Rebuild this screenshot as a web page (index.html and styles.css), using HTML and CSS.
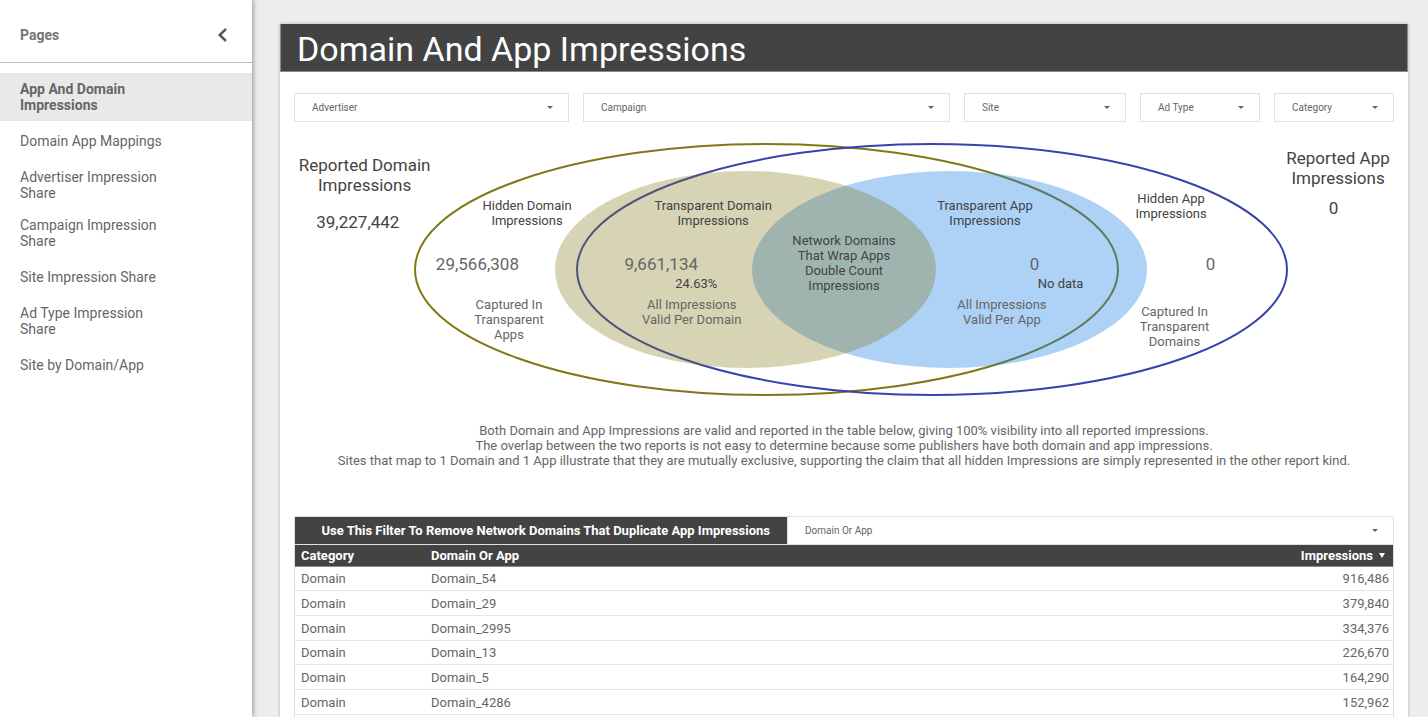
FILE: index.html
```html
<!DOCTYPE html>
<html lang="en">
<head>
<meta charset="utf-8">
<title>Domain And App Impressions</title>
<link rel="stylesheet" href="styles.css">
</head>
<body>
<div class="app">
  <aside class="sidebar">
    <header class="sidebar-head">
      <h2 class="sidebar-title">Pages</h2>
      <button class="collapse" type="button" aria-label="Collapse pages">
        <svg width="12" height="16" viewBox="0 0 12 16" aria-hidden="true"><path d="M10 2 3.700 8l6.300 6" fill="none" stroke="#5a5a5a" stroke-width="2.500"/></svg>
      </button>
    </header>
    <nav class="pages">
      <a class="page active" href="#" aria-current="page">App And Domain Impressions</a>
      <a class="page" href="#">Domain App Mappings</a>
      <a class="page" href="#">Advertiser Impression Share</a>
      <a class="page" href="#">Campaign Impression Share</a>
      <a class="page" href="#">Site Impression Share</a>
      <a class="page" href="#">Ad Type Impression Share</a>
      <a class="page" href="#">Site by Domain/App</a>
    </nav>
  </aside>

  <main class="stage">
    <article class="report">
      <h1 class="report-title">Domain And App Impressions</h1>

      <div class="filters">
        <div class="filter"><select aria-label="Advertiser"><option>Advertiser</option></select><span class="caret"></span></div>
        <div class="filter"><select aria-label="Campaign"><option>Campaign</option></select><span class="caret"></span></div>
        <div class="filter"><select aria-label="Site"><option>Site</option></select><span class="caret"></span></div>
        <div class="filter"><select aria-label="Ad Type"><option>Ad Type</option></select><span class="caret"></span></div>
        <div class="filter"><select aria-label="Category"><option>Category</option></select><span class="caret"></span></div>
      </div>

      <section class="venn" aria-label="Impression overlap">
        <svg class="venn-shapes" viewBox="280 122 1128 280" preserveAspectRatio="none" aria-hidden="true">
          <ellipse class="ring ring-domain" cx="766.500" cy="269.500" rx="351.500" ry="125.500"/>
          <ellipse class="ring ring-app" cx="932" cy="269.500" rx="355" ry="125.500"/>
          <ellipse class="disc-app" cx="949.500" cy="269.500" rx="197.500" ry="98.500"/>
          <ellipse class="disc-domain" cx="745.500" cy="269.500" rx="190.500" ry="98.500"/>
        </svg>
        <p class="label big reported-domain">Reported Domain<br>Impressions</p>
        <p class="label big reported-domain-total">39,227,442</p>
        <p class="label hidden-domain">Hidden Domain<br>Impressions</p>
        <p class="label big soft hidden-domain-total">29,566,308</p>
        <p class="label soft captured-apps">Captured In<br>Transparent<br>Apps</p>
        <p class="label transparent-domain">Transparent Domain<br>Impressions</p>
        <p class="label big soft transparent-domain-total">9,661,134</p>
        <p class="label transparent-domain-share">24.63%</p>
        <p class="label soft valid-domain">All Impressions<br>Valid Per Domain</p>
        <p class="label network">Network Domains<br>That Wrap Apps<br>Double Count<br>Impressions</p>
        <p class="label transparent-app">Transparent App<br>Impressions</p>
        <p class="label big soft transparent-app-total">0</p>
        <p class="label transparent-app-share">No data</p>
        <p class="label soft valid-app">All Impressions<br>Valid Per App</p>
        <p class="label hidden-app">Hidden App<br>Impressions</p>
        <p class="label big soft hidden-app-total">0</p>
        <p class="label soft captured-domains">Captured In<br>Transparent<br>Domains</p>
        <p class="label big reported-app">Reported App<br>Impressions</p>
        <p class="label big reported-app-total">0</p>
      </section>

      <p class="note">Both Domain and App Impressions are valid and reported in the table below, giving 100% visibility into all reported impressions.<br>The overlap between the two reports is not easy to determine because some publishers have both domain and app impressions.<br>Sites that map to 1 Domain and 1 App illustrate that they are mutually exclusive, supporting the claim that all hidden Impressions are simply represented in the other report kind.</p>

      <section class="data">
        <div class="data-filter">
          <label class="data-label" for="kind">Use This Filter To Remove Network Domains That Duplicate App Impressions</label>
          <div class="filter"><select id="kind"><option>Domain Or App</option></select><span class="caret"></span></div>
        </div>
        <div class="table-frame">
          <table class="table">
            <thead>
              <tr><th class="col-category" scope="col">Category</th><th scope="col">Domain Or App</th><th class="num" scope="col" aria-sort="descending">Impressions<span class="sort"></span></th></tr>
            </thead>
            <tbody>
              <tr><td>Domain</td><td>Domain_54</td><td class="num">916,486</td></tr>
              <tr><td>Domain</td><td>Domain_29</td><td class="num">379,840</td></tr>
              <tr><td>Domain</td><td>Domain_2995</td><td class="num">334,376</td></tr>
              <tr><td>Domain</td><td>Domain_13</td><td class="num">226,670</td></tr>
              <tr><td>Domain</td><td>Domain_5</td><td class="num">164,290</td></tr>
              <tr><td>Domain</td><td>Domain_4286</td><td class="num">152,962</td></tr>
            </tbody>
          </table>
        </div>
      </section>
    </article>
  </main>
</div>
</body>
</html>
```
FILE: styles.css
```css
*, *::before, *::after { box-sizing: border-box; }

body {
  margin: 0;
  font-family: Roboto, "Liberation Sans", sans-serif;
  color: #666;
  background: #ededed;
}

h1, h2, p { margin: 0; }

.app {
  display: flex;
  height: 100vh;
  overflow: hidden;
}

/* Sidebar */
.sidebar {
  flex: 0 0 252px;
  background: #fff;
  box-shadow: 1px 0 5px rgba(0, 0, 0, 0.4);
  z-index: 1;
}

.sidebar-head {
  display: flex;
  align-items: center;
  justify-content: space-between;
  height: 63px;
  padding: 7px 20px 0;
  border-bottom: 1px solid #bdbdbd;
}

.sidebar-title {
  font-size: 14px;
  line-height: 16px;
  font-weight: 700;
  color: #757575;
}

.collapse {
  display: flex;
  align-items: center;
  justify-content: center;
  width: 20px;
  height: 24px;
  padding: 0;
  border: 0;
  background: none;
}

.pages {
  display: flex;
  flex-direction: column;
  padding-top: 10px;
}

.page {
  display: flex;
  align-items: center;
  min-height: 40px;
  padding: 8px 72px 8px 20px;
  font-size: 14px;
  line-height: 16px;
  color: #666;
  text-decoration: none;
}

.page.active {
  font-weight: 700;
  background: #e9e9e9;
}

/* Report */
.stage {
  flex: 1;
  min-width: 0;
  display: flex;
  padding: 24px 20px 0 28px;
}

.report {
  flex: 1;
  min-width: 0;
  display: flex;
  flex-direction: column;
  background: #fff;
  box-shadow: 0 0 3px rgba(0, 0, 0, 0.3);
}

.report-title {
  padding: 6px 16px 2px;
  border: 1px solid #8a8a8a;
  border-width: 0 1px 1px;
  background: #434343;
  color: #fff;
  font-size: 34px;
  line-height: 39px;
  font-weight: 400;
}

.filters {
  display: grid;
  grid-template-columns: 275fr 367fr 162fr 120fr 120fr;
  gap: 14px;
  padding: 21px 14px 0;
}

.filter {
  position: relative;
  display: flex;
  min-width: 0;
}

.filter select {
  flex: 1;
  min-width: 0;
  height: 29px;
  padding: 0 17px;
  border: 1px solid #e0e0e0;
  border-radius: 0;
  appearance: none;
  background: #fff;
  color: #666;
  font: 10px/14px Roboto, "Liberation Sans", sans-serif;
}

.caret {
  position: absolute;
  right: 16px;
  top: 13px;
  border: solid transparent;
  border-width: 3px 3px 0;
  border-top-color: #666;
  pointer-events: none;
}

/* Diagram */
.venn {
  position: relative;
  height: 280px;
}

.venn-shapes {
  display: block;
  width: 100%;
  height: 100%;
}

.ring { fill: none; stroke-width: 2; vector-effect: non-scaling-stroke; }
.ring-domain { stroke: #827717; }
.ring-app { stroke: #3643ae; }
.disc-app { fill: rgba(30, 127, 229, 0.36); }
.disc-domain { fill: rgba(132, 119, 25, 0.32); }

.label {
  position: absolute;
  transform: translateX(-50%);
  white-space: nowrap;
  text-align: center;
  font-size: 13px;
  line-height: 15px;
  color: #434343;
}

.big { font-size: 17px; line-height: 20px; }
.soft { color: #666; }

.reported-domain { left: 7.5%; top: 33px; }
.reported-domain-total { left: 6.9%; top: 90px; }
.hidden-domain { left: 21.9%; top: 76px; }
.hidden-domain-total { left: 17.5%; top: 132px; }
.captured-apps { left: 20.3%; top: 175px; }
.transparent-domain { left: 38.4%; top: 76px; }
.transparent-domain-total { left: 33.8%; top: 132px; }
.transparent-domain-share { left: 36.9%; top: 154px; }
.valid-domain { left: 36.5%; top: 175px; }
.network { left: 50%; top: 111px; }
.transparent-app { left: 62.5%; top: 76px; }
.transparent-app-total { left: 66.9%; top: 132px; }
.transparent-app-share { left: 69.2%; top: 154px; }
.valid-app { left: 64%; top: 175px; }
.hidden-app { left: 79%; top: 69px; }
.hidden-app-total { left: 82.5%; top: 132px; }
.captured-domains { left: 79.3%; top: 182px; }
.reported-app { left: 93.8%; top: 26px; }
.reported-app-total { left: 93.4%; top: 76px; }

.note {
  padding: 21px 14px 48px;
  text-align: center;
  font-size: 13px;
  line-height: 15px;
  color: #666;
}

/* Table */
.data {
  flex: 1;
  display: flex;
  flex-direction: column;
  padding: 0 14px;
}

.data-filter {
  display: grid;
  grid-template-columns: 493fr 607fr;
}

.data-label {
  display: flex;
  align-items: center;
  justify-content: flex-end;
  padding: 0 17px;
  border: 1px solid #e0e0e0;
  border-right: 0;
  background: #434343;
  color: #fff;
  font-size: 13px;
  line-height: 15px;
  font-weight: 700;
}

.table-frame {
  flex: 1;
  border: 1px solid #dcdcdc;
  border-width: 0 1px;
}

.table {
  width: 100%;
  border-collapse: separate;
  border-spacing: 0;
  font-size: 13px;
  line-height: 15px;
}

.table th {
  height: 22px;
  padding: 0 6px;
  border-bottom: 1px solid #8a8a8a;
  background: #434343;
  color: #fff;
  font-weight: 700;
  text-align: left;
}

.table td {
  height: 25px;
  padding: 0 6px;
  border-bottom: 1px solid #e6e6e6;
}

.table tbody tr:nth-child(3n + 1) td { height: 24px; }

.table .col-category { width: 130px; }

.table .num {
  padding-right: 4px;
  text-align: right;
}

.sort {
  display: inline-block;
  margin: 0 4px 2px 6px;
  border: solid transparent;
  border-width: 5px 3px 0;
  border-top-color: #fff;
}
```
